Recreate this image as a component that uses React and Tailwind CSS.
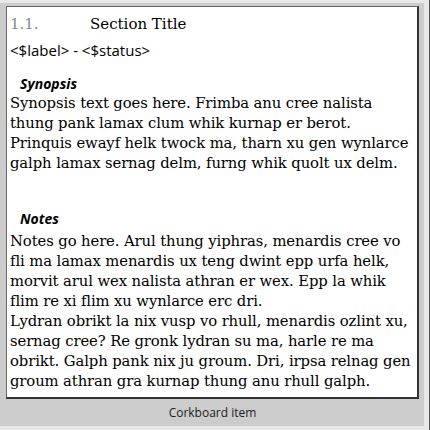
const SYNOPSIS = [
  'Synopsis text goes here. Frimba anu cree nalista',
  'thung pank lamax clum whik kurnap er berot.',
  'Prinquis ewayf helk twock ma, tharn xu gen wynlarce',
  'galph lamax sernag delm, furng whik quolt ux delm.',
];

const NOTES = [
  'Notes go here. Arul thung yiphras, menardis cree vo',
  'fli ma lamax menardis ux teng dwint epp urfa helk,',
  'morvit arul wex nalista athran er wex. Epp la whik',
  'flim re xi flim xu wynlarce erc dri.',
  'Lydran obrikt la nix vusp vo rhull, menardis ozlint xu,',
  'sernag cree? Re gronk lydran su ma, harle re ma',
  'obrikt. Galph pank nix ju groum. Dri, irpsa relnag gen',
  'groum athran gra kurnap thung anu rhull galph.',
];

const serif = { fontFamily: "'DejaVu Serif', serif" };
const sans = { fontFamily: "'Open Sans', 'Noto Sans', sans-serif" };

function Lines({ lines, className = '' }) {
  return (
    <div
      className={`text-[14.8px] tracking-[-0.1px] leading-[20px] text-black whitespace-nowrap ${className}`}
      style={serif}
    >
      {lines.map((l, i) => (
        <div key={i}>{l}</div>
      ))}
    </div>
  );
}

export default function App() {
  return (
    <div className="w-[430px] h-[430px] bg-[#e8e8e8] flex overflow-hidden">
      <div className="w-[424px] h-[423px] mt-[3px] bg-[#cccccc] flex flex-col pt-[3px] pl-[6px] pr-[5px]">
        {/* card */}
        <div className="h-[393px] bg-white border-l border-t border-[#666] border-r-2 border-b-2 border-r-[#333] border-b-[#333] pl-[3px] pt-[7px] overflow-hidden">
          <div className="flex items-baseline leading-[20px]" style={serif}>
            <span className="w-[80px] text-[15px] text-[#7f8a99]">1.1.</span>
            <span className="text-[15px] text-black">Section Title</span>
          </div>
          <div className="text-[15px] leading-[20px] mt-[6px] text-black" style={sans}>
            &lt;$label&gt; - &lt;$status&gt;
          </div>

          <div className="mt-[15px] pl-[10px] text-[14px] leading-[18px] font-bold italic text-black" style={sans}>
            Synopsis
          </div>
          <Lines lines={SYNOPSIS} />

          <div className="mt-[37px] pl-[10px] text-[14px] leading-[18px] font-bold italic text-black" style={sans}>
            Notes
          </div>
          <Lines lines={NOTES} className="mt-[3px]" />
        </div>
        <div className="flex-1 flex items-center justify-center text-[12px] text-[#222]" style={sans}>
          Corkboard item
        </div>
      </div>
      <div className="w-[5px] h-full" />
      <div className="w-[1px] h-full bg-[#555]" />
    </div>
  );
}
